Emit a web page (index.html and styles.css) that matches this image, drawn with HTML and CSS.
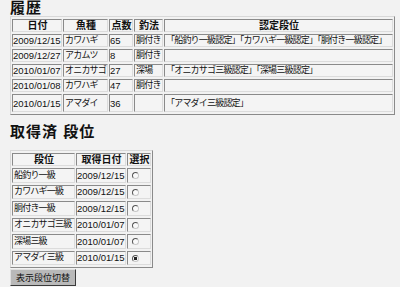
FILE: index.html
```html
<!DOCTYPE html>
<html>

<head>
  <meta charset="utf-8">
  <title>釣果記録</title>
  <link rel="stylesheet" href="styles.css">
</head>

<body>
  <h2 class="section-title">履歴</h2>
  <table class="grid history">
    <thead>
      <tr>
        <th class="c-date">日付</th>
        <th class="c-fish">魚種</th>
        <th class="c-score">点数</th>
        <th class="c-method">釣法</th>
        <th>認定段位</th>
      </tr>
    </thead>
    <tbody>
      <tr>
        <td class="num">2009/12/15</td>
        <td>カワハギ</td>
        <td class="num">65</td>
        <td>胴付き</td>
        <td>「船釣り一級認定」「カワハギ一級認定」「胴付き一級認定」</td>
      </tr>
      <tr>
        <td class="num">2009/12/27</td>
        <td>アカムツ</td>
        <td class="num">8</td>
        <td>胴付き</td>
        <td></td>
      </tr>
      <tr>
        <td class="num">2010/01/07</td>
        <td>オニカサゴ</td>
        <td class="num">27</td>
        <td>深場</td>
        <td>「オニカサゴ三級認定」「深場三級認定」</td>
      </tr>
      <tr>
        <td class="num">2010/01/08</td>
        <td>カワハギ</td>
        <td class="num">47</td>
        <td>胴付き</td>
        <td></td>
      </tr>
      <tr class="tall">
        <td class="num">2010/01/15</td>
        <td>アマダイ</td>
        <td class="num">36</td>
        <td></td>
        <td>「アマダイ三級認定」</td>
      </tr>
    </tbody>
  </table>

  <h2 class="section-title second">取得済 段位</h2>
  <form>
    <table class="grid ranks">
      <thead>
        <tr>
          <th class="c-rank">段位</th>
          <th class="c-got">取得日付</th>
          <th class="c-pick">選択</th>
        </tr>
      </thead>
      <tbody>
        <tr>
          <td>船釣り一級</td>
          <td class="num">2009/12/15</td>
          <td><input type="radio" name="rank" value="1"></td>
        </tr>
        <tr>
          <td>カワハギ一級</td>
          <td class="num">2009/12/15</td>
          <td><input type="radio" name="rank" value="2"></td>
        </tr>
        <tr>
          <td>胴付き一級</td>
          <td class="num">2009/12/15</td>
          <td><input type="radio" name="rank" value="3"></td>
        </tr>
        <tr>
          <td>オニカサゴ三級</td>
          <td class="num">2010/01/07</td>
          <td><input type="radio" name="rank" value="4"></td>
        </tr>
        <tr>
          <td>深場三級</td>
          <td class="num">2010/01/07</td>
          <td><input type="radio" name="rank" value="5"></td>
        </tr>
        <tr>
          <td>アマダイ三級</td>
          <td class="num">2010/01/15</td>
          <td><input type="radio" name="rank" value="6" checked></td>
        </tr>
      </tbody>
    </table>
    <button type="button" class="switch">表示段位切替</button>
  </form>
</body>

</html>
```

FILE: styles.css
```css
body {
  margin: 0;
  padding: 0 10px;
  background-color: #f2f2f2;
  color: #111;
  font-family: 'Liberation Sans', 'Noto Sans CJK JP', sans-serif;
  font-size: 9px;
}

.section-title {
  margin: 0;
  font-size: 15px;
  line-height: 16px;
  letter-spacing: 1px;
  font-weight: bold;
}

.section-title.second {
  margin-top: 9px;
  margin-bottom: 10px;
}

/* old-style border="1" tables */
.grid {
  border: 1px solid;
  border-color: #d8d8d8 #8a8a8a #8a8a8a #d8d8d8;
  border-spacing: 1px 2px;
  table-layout: fixed;
}

.grid th,
.grid td {
  box-sizing: border-box;
  border: 1px solid;
  border-color: #8a8a8a #dcdcdc #dcdcdc #8a8a8a;
  padding: 0 0 0 1px;
  line-height: 11px;
  white-space: nowrap;
  overflow: hidden;
  background-color: #f4f4f4;
}

.grid th {
  font-size: 10px;
  font-weight: bold;
  text-align: center;
}

/* japanese text packs tighter than the default CJK font */
.grid td {
  text-align: left;
  letter-spacing: -0.8px;
}

.grid td.num {
  padding-left: 0;
  font-size: 9.5px;
  letter-spacing: 0;
}

.history {
  width: 385px;
}

.history .tall td {
  height: 18px;
}

.c-date { width: 50px; }
.c-fish { width: 45px; }
.c-score { width: 24px; }
.c-method { width: 29px; }

.ranks {
  width: 143px;
}

.ranks td {
  height: 14.5px;
}

.c-rank { width: 63px; }
.c-got { width: 50px; }
.c-pick { width: 24px; }

.ranks input[type="radio"] {
  appearance: none;
  -webkit-appearance: none;
  display: block;
  width: 7px;
  height: 7px;
  margin: 1px 0 0 3px;
  border: 1px solid;
  border-color: #555 #c8c8c8 #c8c8c8 #555;
  border-radius: 50%;
  background-color: #fafafa;
}

.ranks input[type="radio"]:checked {
  background: radial-gradient(circle, #222 0, #222 1.5px, #fafafa 2px);
}

.switch {
  display: block;
  margin-top: 1px;
  width: 66px;
  height: 17px;
  padding: 0;
  border: 1px solid;
  border-color: #e0e0e0 #3a3a3a #3a3a3a #e0e0e0;
  background-color: #b9b9b9;
  color: #111;
  font-family: 'Noto Sans CJK JP', sans-serif;
  font-size: 9px;
  line-height: 15px;
  white-space: nowrap;
}
```
